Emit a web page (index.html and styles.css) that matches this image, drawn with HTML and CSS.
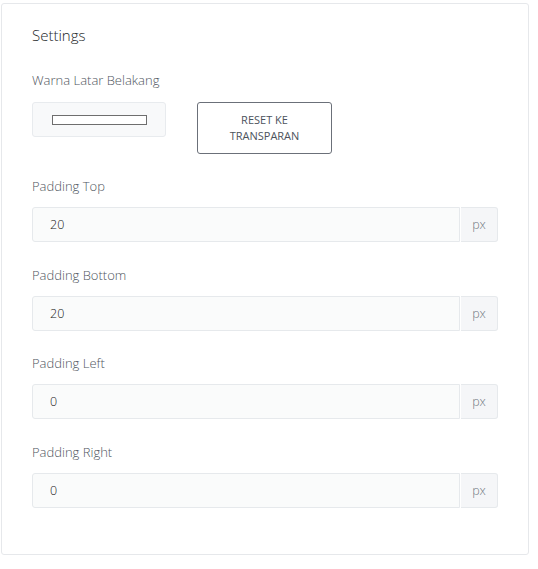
FILE: index.html
```html
<!DOCTYPE html>
<html>
<head>
<meta charset="utf-8">
<link rel="stylesheet" href="styles.css">
</head>
<body>
<div class="card">
  <h2 class="title">Settings</h2>
  <div class="field first">
    <label class="label">Warna Latar Belakang</label>
    <div class="color-row">
      <div class="swatch"><span class="swatch-inner"></span></div>
      <button class="reset">RESET KE<br>TRANSPARAN</button>
    </div>
  </div>
  <div class="field">
    <label class="label">Padding Top</label>
    <div class="group"><div class="input">20</div><div class="addon">px</div></div>
  </div>
  <div class="field">
    <label class="label">Padding Bottom</label>
    <div class="group"><div class="input">20</div><div class="addon">px</div></div>
  </div>
  <div class="field">
    <label class="label">Padding Left</label>
    <div class="group"><div class="input">0</div><div class="addon">px</div></div>
  </div>
  <div class="field">
    <label class="label">Padding Right</label>
    <div class="group"><div class="input">0</div><div class="addon">px</div></div>
  </div>
</div>
</body>
</html>
```
FILE: styles.css
```css
html, body { margin: 0; padding: 0; background: #fff; }
body { font-family: "Open Sans", "Noto Sans", sans-serif; }
.card {
  margin: 3px 0 0 1px;
  width: 528px;
  height: 552px;
  box-sizing: border-box;
  border: 1px solid #e6e8eb;
  border-radius: 3px;
  padding: 21px 30px 0 30px;
}
.title {
  margin: 0;
  font-size: 15px;
  font-weight: 300;
  color: #222629;
  line-height: 20px;
}
.field { display: flex; flex-direction: column; }
.label {
  font-size: 13px;
  font-weight: 300;
  color: #4f5660;
  line-height: 18px;
  margin-top: 23px;
  margin-bottom: 12px;
}
.field.first .label { margin-top: 26px; margin-bottom: 13px; }
.color-row { display: flex; gap: 31px; align-items: flex-start; }
.color-row + .x { }
.field:nth-child(3) .label { margin-top: 23px; }
.field:nth-child(4) .label { margin-top: 24px; }
.field:nth-child(6) .label { margin-top: 24px; }
.swatch {
  width: 134px; height: 35px; box-sizing: border-box;
  background: #f8f9fa; border: 1px solid #e8ebee; border-radius: 3px;
  display: flex; align-items: center; justify-content: center;
}
.swatch-inner {
  width: 95px; height: 10px; box-sizing: border-box;
  border: 1px solid #6e6e6e; background: #fff;
}
.reset {
  width: 135px; height: 52px; box-sizing: border-box;
  background: #fff; border: 1px solid #6b7079; border-radius: 3px;
  font-family: "Open Sans", "Noto Sans", sans-serif;
  font-size: 11px; font-weight: 400; color: #4c535c; line-height: 16px;
  padding: 0; margin-top: 0;
}
.group { display: flex; height: 35px; }
.input {
  flex: 1; box-sizing: border-box;
  background: #fafbfb; border: 1px solid #e6e9ec; border-radius: 3px 0 0 3px;
  padding-left: 17px;
  font-size: 12.5px; font-weight: 300; color: #222; line-height: 33px;
}
.addon {
  width: 37px; box-sizing: border-box;
  background: #f5f6f8; border: 1px solid #e6e9ec; border-left: none; border-radius: 0 3px 3px 0;
  margin-left: 1px;
  font-size: 12.5px; font-weight: 300; color: #6f7680; line-height: 33px; text-align: center;
}
```
